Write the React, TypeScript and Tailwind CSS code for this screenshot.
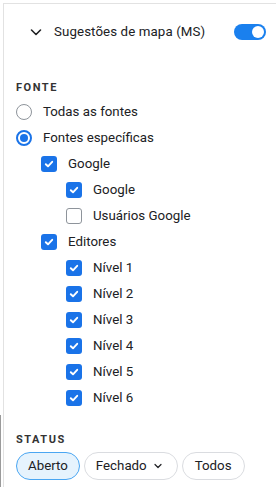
import React from "react";

type Item = { label: string; checked: boolean; level: 1 | 2 };

const items: Item[] = [
  { label: "Google", checked: true, level: 1 },
  { label: "Google", checked: true, level: 2 },
  { label: "Usuários Google", checked: false, level: 2 },
  { label: "Editores", checked: true, level: 1 },
  { label: "Nível 1", checked: true, level: 2 },
  { label: "Nível 2", checked: true, level: 2 },
  { label: "Nível 3", checked: true, level: 2 },
  { label: "Nível 4", checked: true, level: 2 },
  { label: "Nível 5", checked: true, level: 2 },
  { label: "Nível 6", checked: true, level: 2 },
];

const Check = ({ checked }: { checked: boolean }) =>
  checked ? (
    <span className="h-4 w-4 rounded-[3px] bg-[#1a73e8] grid place-items-center shrink-0">
      <svg width="10" height="10" viewBox="0 0 10 10" fill="none">
        <path d="M1.8 5.2 4 7.3 8.2 2.8" stroke="white" strokeWidth="1.9" strokeLinecap="round" strokeLinejoin="round" />
      </svg>
    </span>
  ) : (
    <span className="h-4 w-4 rounded-[3px] border border-[#8e949b] bg-white shrink-0" />
  );

const Radio = ({ on }: { on: boolean }) => (
  <span
    className={
      on
        ? "h-4 w-4 rounded-full border-2 border-[#1a73e8] grid place-items-center shrink-0"
        : "h-4 w-4 rounded-full border border-[#8e949b] shrink-0"
    }
  >
    {on ? <span className="h-2 w-2 rounded-full bg-[#1a73e8]" /> : null}
  </span>
);

export default function App() {
  return (
    <div
      className="relative w-[276px] h-[487px] bg-white overflow-hidden pl-[3px] text-[#202124]"
      style={{ fontFamily: "Roboto, 'Liberation Sans', sans-serif" }}
    >
      <div className="absolute left-0 top-[415px] bottom-0 w-px bg-[#9a9a9a]" />
      <div className="h-full border-l border-[#e2e2e2]">
        <div className="mt-[3px] border-t border-[#e2e2e2]">
          {/* header */}
          <div className="flex items-center h-6 mt-4 pl-[25px] pr-[10px]">
            <svg width="14" height="14" viewBox="0 0 14 14" fill="none" className="shrink-0">
              <path d="M2.5 5 7 9.5 11.5 5" stroke="#202124" strokeWidth="1.6" strokeLinecap="round" strokeLinejoin="round" />
            </svg>
            <span className="ml-[11px] text-[13.3px] tracking-[0.1px]">Sugestões de mapa (MS)</span>
            <span className="ml-auto h-4 w-8 rounded-full bg-[#1a80ee] flex items-center justify-end pr-[2px]">
              <span className="h-3 w-3 rounded-full bg-white" />
            </span>
          </div>

          {/* fonte */}
          <div className="pl-3 mt-[37px] text-[11px] font-bold tracking-[0.14em] text-[#333] leading-[14px]">
            FONTE
          </div>
          <div className="pl-3 mt-[4px] flex items-center gap-[11px] h-[26px] text-[13.3px]">
            <Radio on={false} />
            <span>Todas as fontes</span>
          </div>
          <div className="pl-3 flex items-center gap-[11px] h-[26px] text-[13.3px]">
            <Radio on={true} />
            <span>Fontes específicas</span>
          </div>
          {items.map((it, i) => (
            <div
              key={i}
              className={
                "flex items-center gap-[11px] h-[26px] text-[13.3px] " +
                (it.level === 1 ? "pl-[37px]" : "pl-[62px]")
              }
            >
              <Check checked={it.checked} />
              <span>{it.label}</span>
            </div>
          ))}

          {/* status */}
          <div className="pl-3 mt-[22px] text-[11px] font-bold tracking-[0.14em] text-[#333] leading-[14px]">
            STATUS
          </div>
          <div className="pl-3 mt-[5px] flex gap-1 text-[13.3px]">
            <span className="h-7 px-[11px] rounded-full border border-[#4aa6f2] bg-[#e6f3fd] flex items-center">
              Aberto
            </span>
            <span className="h-7 pl-[11px] pr-[14px] rounded-full border border-[#dadce0] flex items-center gap-[6px]">
              Fechado
              <svg width="10" height="10" viewBox="0 0 10 10" fill="none">
                <path d="M2 3.5 5 6.5 8 3.5" stroke="#202124" strokeWidth="1.2" strokeLinecap="round" strokeLinejoin="round" />
              </svg>
            </span>
            <span className="h-7 px-3 rounded-full border border-[#dadce0] flex items-center">Todos</span>
          </div>
        </div>
      </div>
    </div>
  );
}
